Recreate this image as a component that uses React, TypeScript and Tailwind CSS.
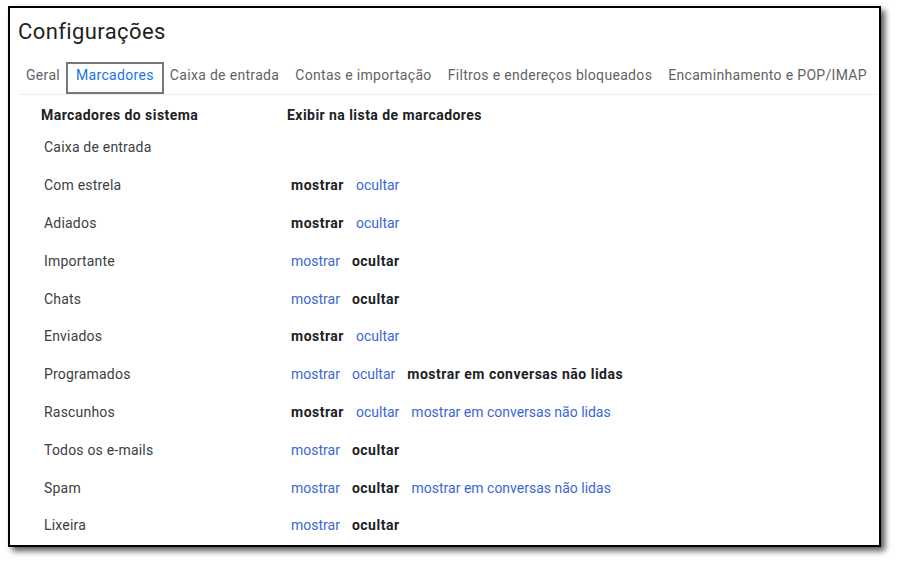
import React from 'react';

type Opt = { text: string; active: boolean };

interface LabelRow {
  name: string;
  options: Opt[];
}

const show = (a: 'mostrar' | 'ocultar'): Opt[] => [
  { text: 'mostrar', active: a === 'mostrar' },
  { text: 'ocultar', active: a === 'ocultar' },
];

const rows: LabelRow[] = [
  { name: 'Caixa de entrada', options: [] },
  { name: 'Com estrela', options: show('mostrar') },
  { name: 'Adiados', options: show('mostrar') },
  { name: 'Importante', options: show('ocultar') },
  { name: 'Chats', options: show('ocultar') },
  { name: 'Enviados', options: show('mostrar') },
  {
    name: 'Programados',
    options: [
      { text: 'mostrar', active: false },
      { text: 'ocultar', active: false },
      { text: 'mostrar em conversas não lidas', active: true },
    ],
  },
  {
    name: 'Rascunhos',
    options: [...show('mostrar'), { text: 'mostrar em conversas não lidas', active: false }],
  },
  { name: 'Todos os e-mails', options: show('ocultar') },
  {
    name: 'Spam',
    options: [...show('ocultar'), { text: 'mostrar em conversas não lidas', active: false }],
  },
  { name: 'Lixeira', options: show('ocultar') },
];

const tabs = [
  'Geral',
  'Marcadores',
  'Caixa de entrada',
  'Contas e importação',
  'Filtros e endereços bloqueados',
  'Encaminhamento e POP/IMAP',
];

const App: React.FC = () => {
  return (
    <div
      className="w-[900px] h-[565px] bg-white pt-[6px] pl-[8px]"
      style={{ fontFamily: 'Roboto, "Noto Sans", sans-serif' }}
    >
      <div className="w-[873px] h-[541px] border-2 border-black bg-white shadow-[4px_4px_6px_rgba(0,0,0,0.65)] overflow-hidden">
        {/* Title */}
        <h1 className="pl-[8px] pt-[10px] text-[22px] leading-[28px] tracking-[0.4px] text-[#1f1f1f] font-normal">
          Configurações
        </h1>

        {/* Tabs */}
        <div className="ml-[8px] mt-[16px] flex items-stretch whitespace-nowrap border-b border-[#eceef1] tracking-[0.32px]">
          {tabs.map((t) =>
            t === 'Marcadores' ? (
              <div
                key={t}
                className="shrink-0 -mx-[2px] px-2 h-[32px] border-2 border-[#777777] text-[14px] leading-[23px] text-[#1a73e8]"
              >
                {t}
              </div>
            ) : (
              <div key={t} className="shrink-0 px-2 h-[32px] pt-[1px] text-[14px] leading-[24px] text-[#5f6368]">
                {t}
              </div>
            )
          )}
        </div>

        {/* Header */}
        <div className="flex pt-[10px] pb-[4px] text-[14px] leading-[20px] font-bold tracking-[0.45px] text-[#202124]">
          <div className="w-[277px] pl-[31px]">Marcadores do sistema</div>
          <div>Exibir na lista de marcadores</div>
        </div>

        {/* Rows */}
        {rows.map((r) => (
          <div key={r.name} className="flex items-center h-[37.8px] text-[14px]">
            <div className="w-[281px] pl-[34px] tracking-[0.2px] text-[#3c4043]">{r.name}</div>
            <div className="flex gap-[12px]">
              {r.options.map((o, i) => (
                <span
                  key={i}
                  className={o.active ? 'font-bold tracking-[0.5px] text-[#202124]' : 'text-[#3b67d4]'}
                >
                  {o.text}
                </span>
              ))}
            </div>
          </div>
        ))}
      </div>
    </div>
  );
};

export default App;
